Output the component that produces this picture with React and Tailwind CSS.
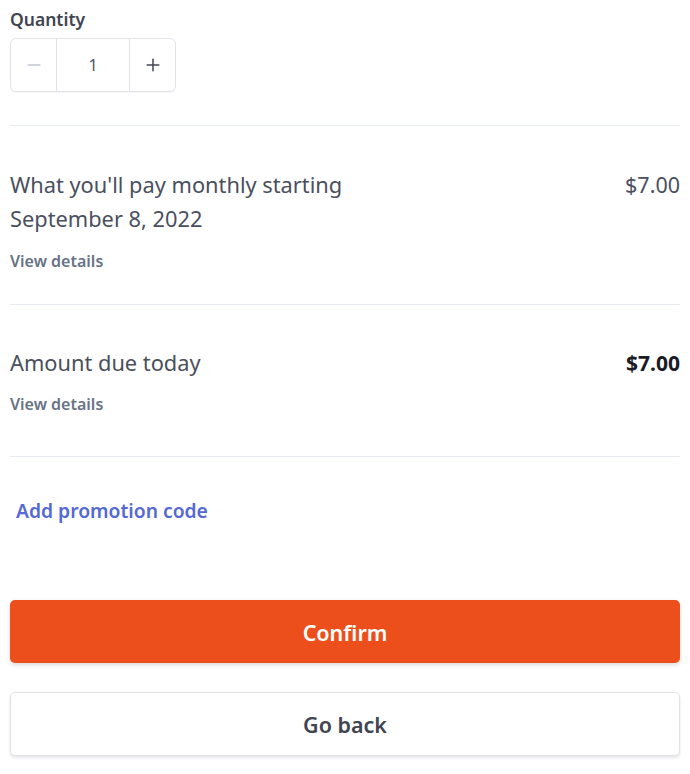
import { Minus, Plus } from "lucide-react";

const ViewDetails = () => (
  <button type="button" className="mt-[14px] block text-[16px] font-semibold leading-[18px] text-[#687385]">
    View details
  </button>
);

const Divider = () => <div className="h-px bg-[#e6ebf1]" />;

export default function App() {
  return (
    <div className="min-h-screen bg-white px-[10px] font-['Noto_Sans',sans-serif] text-[#414552]">
      <p className="pt-[8px] text-[17.5px] font-semibold leading-[22px] text-[#414552]">Quantity</p>
      <div className="mt-[8px] inline-flex h-[54px] overflow-hidden rounded-[6px] border border-[#e0e3e8] shadow-[0_1px_1px_rgba(0,0,0,0.04)]">
        <button type="button" className="flex w-[45px] items-center justify-center text-[#c0c8d2]">
          <Minus size={20} strokeWidth={1.8} />
        </button>
        <div className="flex w-[74px] items-center justify-center border-x border-[#e0e3e8] text-[17px] text-[#545969]">1</div>
        <button type="button" className="flex w-[45px] items-center justify-center text-[#414552]">
          <Plus size={20} strokeWidth={1.8} />
        </button>
      </div>

      <div className="mt-[33px]">
        <Divider />
      </div>

      <div className="flex justify-between pt-[42px]">
        <p className="text-[21.8px] leading-[34px] text-[#4a4f5e]">
          What you'll pay monthly starting
          <br />
          September 8, 2022
        </p>
        <span className="text-[21.5px] leading-[34px] text-[#4a4f5e]">$7.00</span>
      </div>
      <div className="pt-[2px]">
        <ViewDetails />
      </div>

      <div className="mt-[34px]">
        <Divider />
      </div>

      <div className="flex justify-between pt-[41px]">
        <p className="text-[21.8px] leading-[34px] text-[#4a4f5e]">Amount due today</p>
        <span className="text-[21px] font-bold leading-[34px] text-[#1a1b25]">$7.00</span>
      </div>
      <div className="pt-[1px]">
        <ViewDetails />
      </div>

      <div className="mt-[43px]">
        <Divider />
      </div>

      <button type="button" className="mt-[42px] block px-[6px] text-[19.3px] font-semibold leading-[24px] text-[#5469d4]">
        Add promotion code
      </button>

      <button
        type="button"
        className="mt-[77px] flex h-[63px] w-full items-center justify-center rounded-[5px] bg-[#ed4f1c] pt-[3px] text-[21.5px] font-semibold text-white shadow-[0_2px_4px_rgba(0,0,0,0.15)]"
      >
        Confirm
      </button>
      <button
        type="button"
        className="mt-[29px] flex h-[64px] w-full items-center justify-center rounded-[5px] border border-[#e0e3e8] bg-white pt-[2px] text-[21.5px] font-semibold text-[#414552] shadow-[0_2px_3px_rgba(0,0,0,0.1)]"
      >
        Go back
      </button>
    </div>
  );
}
